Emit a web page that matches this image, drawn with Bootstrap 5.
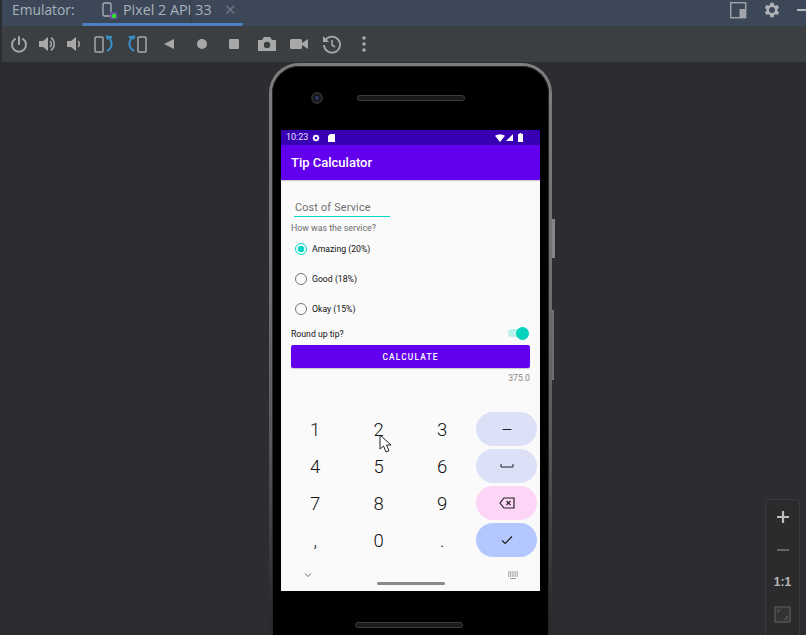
<!doctype html>
<html lang="en">
<head>
<meta charset="utf-8">
<title>Emulator</title>
<link href="https://cdn.jsdelivr.net/npm/bootstrap@5.3.0/dist/css/bootstrap.min.css" rel="stylesheet">
<style>
html,body{width:806px;height:635px;overflow:hidden;background:#2b2d30;margin:0}
.ide{width:806px;height:635px;border-left:2px solid #2b2d30;font-family:"Open Sans","Noto Sans",sans-serif;overflow:hidden}
.tabbar{height:26px;background:#3c4858;color:#a9b2bb;position:relative}
.tab-label{margin-left:10px;width:70px;line-height:20px;font-size:13.8px}
.tab-item{width:161px;height:26px;border-bottom:3px solid #4a7fc0;border-radius:0 0 2px 2px;padding-left:20px;gap:5px;line-height:20px;font-size:14.3px}
.tab-close{color:#6a7580;font-size:15px;margin-left:7px;font-family:"Liberation Sans",sans-serif}
.tab-sep{position:absolute;left:188px;top:0;width:1px;height:22px;background:rgba(0,0,0,.2)}
.tab-right{margin-left:auto;gap:15px;height:20px}
.toolbar{height:36px;background:#3c3f41;padding-left:7px}
.tool-ic{width:20px;height:20px;flex:none}
.tg6{margin-left:6px}.tg8{margin-left:8px}.tg11{margin-left:11px}.tg12{margin-left:12px}.tg13{margin-left:13px}
.stage{height:573px;position:relative;background:#2b2d30;overflow:hidden;padding:1px 0 0 267px}
.phone{position:relative;flex:none;width:283px;height:640px;border-radius:30px;padding:3px;background:linear-gradient(180deg,#7e7e7e 0,#6f6f6f 35%,#585858 60%,#2c2c2c 85%,#262626 100%)}
.phone-body{position:relative;width:277px;height:634px;background:#000;border-radius:27px;padding:64px 9px 0;box-shadow:inset 0 0 0 1px #262626}
.phone-side{position:absolute;left:283px;background:#858585}
.side-one{top:156px;width:3px;height:39px}
.side-two{top:247px;width:2px;height:70px;background:#6f6f6f}
.cam{position:absolute;left:39px;top:26px;width:12px;height:12px;border-radius:50%;background:radial-gradient(circle,#2b3a66 1.5px,#14161a 2.5px);border:2px solid #2a2c30}
.spk{position:absolute;width:108px;height:6px;border-radius:3px;background:#1a1a1a;border:1px solid #3d3d3d}
.spk-top{left:85px;top:29px}
.spk-bot{left:83px;top:556px}
.screen{width:259px;height:461px;background:#fafafa;font-family:Roboto,sans-serif;position:relative;color:#1c1c1c}
.statusbar{height:15px;background:#3700b3;color:#e6e0f8;font-size:9px;padding:0 17px 0 5px}
.st-sig{margin-left:-3px}.st-bat{margin-left:1px}
.appbar{height:35px;background:#6200ee;color:#fff;font-size:13px;font-weight:500;padding:1px 0 0 10px;box-shadow:0 1px 1px rgba(0,0,0,.18)}
.form-area{padding:19px 10px 0;height:232px}
.cost-field{margin:0 0 0 3px;width:96px;height:18px;border-bottom:1.5px solid #03dac5;color:#6f6f6f;font-size:10.8px;letter-spacing:.2px;line-height:18px;padding-left:1px}
.svc{font-size:8.8px;color:#6b6b6b;margin-top:5px;line-height:12px}
.radio-row{height:30px;font-size:8.7px;gap:5px;color:#111;padding-left:4px}
.radio-text{padding-top:2px}
.radio-dot{width:12px;height:12px;border-radius:50%;border:1.3px solid #777;flex:none;background:#fafafa}
.radio-on{border-color:#03dac5;background:radial-gradient(circle,#03dac5 3.2px,#fafafa 3.6px)}
.tip-row{font-size:8.7px;height:18px;line-height:18px;color:#111}
.tip-text{padding-top:1px}
.switch-track{width:17px;height:8px;background:#b9f1ec;border-radius:4px;position:relative;margin-right:5px}
.switch-knob{position:absolute;right:-4px;top:-2.5px;width:13px;height:13px;border-radius:50%;background:#03d3bd}
.calc-btn{height:23px;background:#6200ee;color:#fff;font-size:8.3px;font-weight:500;letter-spacing:1.2px;border-radius:2px;margin-top:3px;padding-top:2px;box-shadow:0 1px 1px rgba(0,0,0,.2)}
.result{text-align:right;font-size:8.7px;color:#888;margin-top:4px;line-height:12px}
.keys{width:259px;height:155px;display:grid;grid-template-columns:63.5px 63.5px 63.5px 64px;grid-auto-rows:37px;padding-left:2.5px}
.key{font-size:18.5px;font-weight:300;color:#111;display:flex;align-items:center;justify-content:center;height:37px}
.pill{width:61px;height:34px;border-radius:17px;margin-left:2px;align-self:start;justify-content:center;align-items:center;display:flex}
.pill-a{background:#dde1f7}.pill-b{background:#fdd6f7}.pill-c{background:#b5c7ff}
.navrow{height:24px;padding:4px 0 0 23px}
.home-pill{margin:11px 0 0 65px;width:68px;height:3px;border-radius:2px;background:#8a8a8a;flex:none}
.nav-kbd{margin-left:62px}
.cursor{position:absolute;left:98px;top:304px;width:14px;height:20px}
.zoom-panel{position:absolute;left:763px;top:437px;width:35px;height:140px;background:#2b2b2d;border:1px solid #3a3b3d;border-radius:4px;color:#b7b7b7;font-family:"Liberation Sans",sans-serif;font-weight:700;padding-top:1px}
.zoom-cell{height:32.5px;font-size:12px}
</style>
</head>
<body>
<div class="ide d-flex flex-column">
  <div class="tabbar d-flex align-items-start">
    <div class="tab-label">Emulator:</div>
    <div class="tab-item d-flex align-items-start">
      <svg width="16" height="20" viewBox="0 0 16 20"><rect x="1" y="3" width="8" height="13" rx="1.5" fill="none" stroke="#a9b2bb" stroke-width="1.3"/><rect x="8" y="12" width="7" height="7" fill="#6a4fa0"/><circle cx="12" cy="16" r="2.3" fill="#2fe02f"/></svg>
      <span>Pixel 2 API 33</span>
      <span class="tab-close">✕</span>
    </div>
    <span class="tab-sep"></span>
    <div class="tab-right d-flex align-items-center">
      <svg width="18" height="18" viewBox="0 0 18 18"><rect x="1.700" y="1.700" width="15" height="15" fill="none" stroke="#a0a5aa" stroke-width="1.400"/><rect x="10.500" y="8" width="6" height="8.700" fill="#a0a5aa"/></svg>
      <svg width="20" height="20" viewBox="0 0 24 24"><path fill="#aeb2b6" d="M19.400 13a7.500 7.500 0 0 0 0-2l2.100-1.600-2-3.400-2.500 1a7.400 7.400 0 0 0-1.700-1L15 3.300h-4l-.4 2.700a7.400 7.400 0 0 0-1.700 1l-2.500-1-2 3.400L6.500 11a7.500 7.500 0 0 0 0 2l-2.100 1.600 2 3.400 2.500-1a7.400 7.400 0 0 0 1.700 1l.4 2.700h4l.4-2.700a7.400 7.400 0 0 0 1.700-1l2.500 1 2-3.400zM13 15.500a3.500 3.500 0 1 1 0-7 3.500 3.500 0 0 1 0 7z" transform="translate(-1 0)"/></svg>
      <svg width="9" height="18" viewBox="0 0 9 18"><rect y="8" width="9" height="2" fill="#b4b8bc"/></svg>
    </div>
  </div>
  <div class="toolbar d-flex align-items-center">
    <svg class="tool-ic" viewBox="0 0 20 20"><path d="M6 5a7 7 0 1 0 8 0" fill="none" stroke="#a8a8a8" stroke-width="2" stroke-linecap="round"/><path d="M10 3v7" stroke="#a8a8a8" stroke-width="2" stroke-linecap="round"/></svg>
    <svg class="tool-ic tg8" viewBox="0 0 20 20"><path d="M2 7h4l5-4v14l-5-4H2z" fill="#a8a8a8"/><path d="M13 7a4 4 0 0 1 0 6M14 3.600a8 8 0 0 1 0 12.800" fill="none" stroke="#a8a8a8" stroke-width="1.500"/></svg>
    <svg class="tool-ic tg6" viewBox="0 0 20 20"><path d="M4 7h4l5-4v14l-5-4H4z" fill="#a8a8a8"/><path d="M15 7a4 4 0 0 1 0 6" fill="none" stroke="#a8a8a8" stroke-width="1.500"/></svg>
    <svg class="tool-ic tg11" viewBox="0 0 20 20"><rect x="1" y="3" width="8" height="15" rx="1" fill="none" stroke="#a8a8a8" stroke-width="1.500"/><path d="M12 3h5l-1 2c3 4 2 9-3 12" fill="none" stroke="#3a8ec9" stroke-width="2"/><path d="M12 1l5 2-4 3z" fill="#3a8ec9"/></svg>
    <svg class="tool-ic tg13" viewBox="0 0 20 20"><rect x="11" y="3" width="8" height="15" rx="1" fill="none" stroke="#a8a8a8" stroke-width="1.500"/><path d="M8 3H3l1 2c-3 4-2 9 3 12" fill="none" stroke="#3a8ec9" stroke-width="2"/><path d="M8 1L3 3l4 3z" fill="#3a8ec9"/></svg>
    <svg class="tool-ic tg12" viewBox="0 0 20 20"><path d="M15 5v10L5 10z" fill="#a8a8a8"/></svg>
    <svg class="tool-ic tg13" viewBox="0 0 20 20"><circle cx="10" cy="10" r="5" fill="#a8a8a8"/></svg>
    <svg class="tool-ic tg12" viewBox="0 0 20 20"><rect x="5" y="5" width="10" height="10" rx="1" fill="#a8a8a8"/></svg>
    <svg class="tool-ic tg13" viewBox="0 0 20 20"><path d="M1 6h4l2-3h6l2 3h4v11H1z" fill="#a8a8a8"/><circle cx="10" cy="11" r="3.200" fill="#3c3f41"/></svg>
    <svg class="tool-ic tg12" viewBox="0 0 20 20"><rect x="1" y="5" width="12" height="10" rx="1.500" fill="#a8a8a8"/><path d="M13 9l6-4v10l-6-4z" fill="#a8a8a8"/></svg>
    <svg class="tool-ic tg13" viewBox="0 0 20 20"><path d="M3.500 6A8 8 0 1 1 2 11" fill="none" stroke="#a8a8a8" stroke-width="1.800"/><path d="M1 2v6h6z" fill="#a8a8a8"/><path d="M10 6v5l3 2" fill="none" stroke="#a8a8a8" stroke-width="1.600"/></svg>
    <svg class="tool-ic tg12" viewBox="0 0 20 20"><circle cx="10" cy="4" r="1.800" fill="#a8a8a8"/><circle cx="10" cy="10" r="1.800" fill="#a8a8a8"/><circle cx="10" cy="16" r="1.800" fill="#a8a8a8"/></svg>
  </div>
  <div class="stage d-flex align-items-start">
    <div class="phone">
      <div class="phone-side side-one"></div>
      <div class="phone-side side-two"></div>
      <div class="phone-body">
        <div class="cam"></div>
        <div class="spk spk-top"></div>
        <div class="screen">
          <div class="statusbar d-flex align-items-center gap-1">
            <span>10:23</span>
            <svg width="8" height="8" viewBox="0 0 24 24"><path fill="#fff" d="M12 1l3 3h5v5l3 3-3 3v5h-5l-3 3-3-3H4v-5l-3-3 3-3V4h5zm0 7a4 4 0 1 0 0 8 4 4 0 0 0 0-8z"/></svg>
            <svg class="ms-1" width="7" height="8" viewBox="0 0 7 8"><path fill="#fff" d="M2 0h5v8H0V2z"/></svg>
            <svg class="ms-auto" width="10" height="8" viewBox="0 0 10 8"><path fill="#fff" d="M0 1.800Q5-1.200 10 1.800L5 8z"/></svg>
            <svg class="st-sig" width="7" height="7" viewBox="0 0 7 7"><path fill="#fff" d="M7 0v7H0z"/></svg>
            <svg class="st-bat" width="5" height="9" viewBox="0 0 5 9"><path fill="#fff" d="M1.500 0h2v1H5v8H0V1h1.500z"/></svg>
          </div>
          <div class="appbar d-flex align-items-center">Tip Calculator</div>
          <div class="form-area">
            <div class="cost-field">Cost of Service</div>
            <div class="svc">How was the service?</div>
            <div class="radio-row d-flex align-items-center"><span class="radio-dot radio-on"></span><span class="radio-text">Amazing (20%)</span></div>
            <div class="radio-row d-flex align-items-center"><span class="radio-dot"></span><span class="radio-text">Good (18%)</span></div>
            <div class="radio-row d-flex align-items-center"><span class="radio-dot"></span><span class="radio-text">Okay (15%)</span></div>
            <div class="tip-row d-flex align-items-center justify-content-between"><span class="tip-text">Round up tip?</span><span class="switch-track"><span class="switch-knob"></span></span></div>
            <div class="calc-btn d-flex align-items-center justify-content-center">CALCULATE</div>
            <div class="result">375.0</div>
          </div>
          <div class="keys">
            <div class="key">1</div><div class="key">2</div><div class="key">3</div>
            <div class="pill pill-a"><svg width="12" height="12" viewBox="0 0 12 12"><path d="M1.500 6.500h9" stroke="#222" stroke-width="1"/></svg></div>
            <div class="key">4</div><div class="key">5</div><div class="key">6</div>
            <div class="pill pill-a"><svg width="16" height="12" viewBox="0 0 16 12"><path d="M2 4v3h12V4" fill="none" stroke="#222" stroke-width="1"/></svg></div>
            <div class="key">7</div><div class="key">8</div><div class="key">9</div>
            <div class="pill pill-b"><svg width="16" height="12" viewBox="0 0 16 12"><path d="M5 1h10v10H5L1 6z" fill="none" stroke="#222" stroke-width="1.200"/><path d="M7.500 4l4 4M11.500 4l-4 4" stroke="#222" stroke-width="1.200"/></svg></div>
            <div class="key">,</div><div class="key">0</div><div class="key">.</div>
            <div class="pill pill-c"><svg width="14" height="12" viewBox="0 0 14 12"><path d="M2 6.500l3.200 3L12 2.500" fill="none" stroke="#222" stroke-width="1.200"/></svg></div>
          </div>
          <div class="navrow d-flex align-items-start">
            <svg width="8" height="8" viewBox="0 0 8 8"><path d="M1 2.500l3 3 3-3" fill="none" stroke="#666" stroke-width="1"/></svg>
            <div class="home-pill"></div>
            <svg class="nav-kbd" width="12" height="9" viewBox="0 0 12 9"><path d="M1 1h10M1 3h10M1 5h10M3 7.500h6" stroke="#777" stroke-width="1" stroke-dasharray="1.200 .6"/></svg>
          </div>
          <svg class="cursor" viewBox="0 0 14 20"><path d="M1 1v14l3.500-3 2.500 6 3-1.300-2.500-5.700H12z" fill="#fff" stroke="#222" stroke-width="1"/></svg>
        </div>
        <div class="spk spk-bot"></div>
      </div>
    </div>
    <div class="zoom-panel d-flex flex-column">
      <div class="zoom-cell d-flex align-items-center justify-content-center"><svg width="14" height="14" viewBox="0 0 14 14"><path d="M7 1v12M1 7h12" stroke="#bdbdbd" stroke-width="2.200"/></svg></div>
      <div class="zoom-cell d-flex align-items-center justify-content-center"><svg width="14" height="14" viewBox="0 0 14 14"><path d="M1 7h12" stroke="#666" stroke-width="2"/></svg></div>
      <div class="zoom-cell d-flex align-items-center justify-content-center">1:1</div>
      <div class="zoom-cell d-flex align-items-center justify-content-center"><svg width="17" height="17" viewBox="0 0 17 17"><rect x="1" y="1" width="15" height="15" fill="#333" stroke="#5a5a5a" stroke-width="1.200"/><path d="M4 7V4h3M13 10v3h-3" fill="none" stroke="#5a5a5a" stroke-width="1.200"/></svg></div>
    </div>
  </div>
</div>
<script src="https://cdn.jsdelivr.net/npm/bootstrap@5.3.0/dist/js/bootstrap.bundle.min.js"></script>
</body>
</html>
